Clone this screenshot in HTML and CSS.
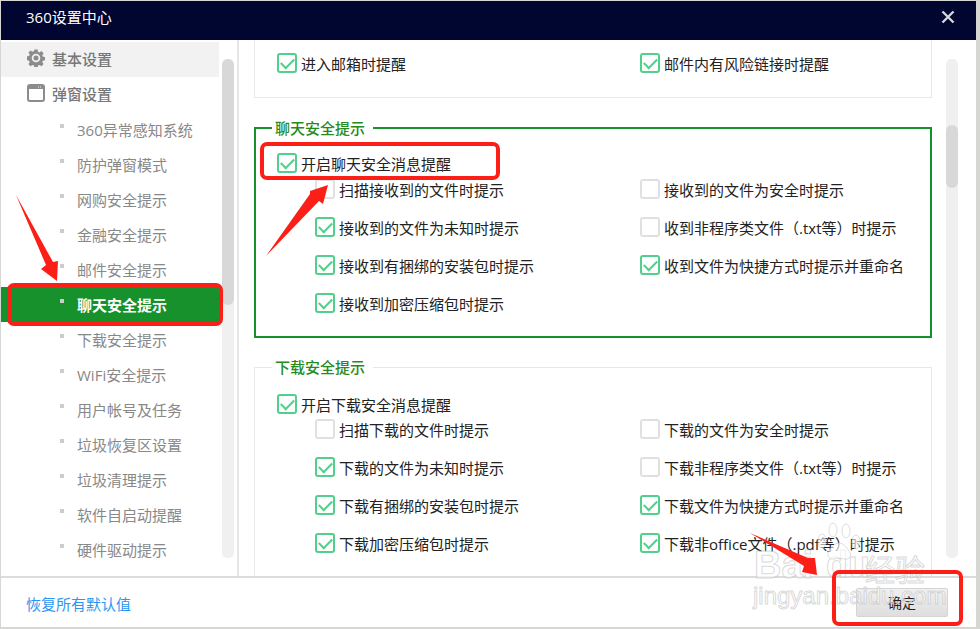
FILE: index.html
```html
<!DOCTYPE html>
<html lang="zh-CN">
<head>
  <meta charset="UTF-8">
  <title>360设置中心</title>
  <link rel="stylesheet" href="styles.css">
</head>
<body>
  <div class="window">
    <div class="titlebar">
      <div class="title">360设置中心</div>
      <svg class="close" width="14" height="14" viewBox="0 0 14 14"><path d="M1.5 1.5L12.5 12.5M12.5 1.5L1.5 12.5" stroke="#d5d5de" stroke-width="2.4" fill="none"/></svg>
    </div>
    <div class="main">
      <div class="sidebar">
        <div class="menu">
          <div class="menu-head current">
            <svg width="18" height="18" viewBox="0 0 18 18"><path d="M7.4 0.5h3.2l.4 2.3 1.5.6 1.9-1.3 2.2 2.2-1.3 1.9.6 1.5 2.300.4v3.200l-2.300.4-.6 1.500 1.300 1.900-2.200 2.200-1.900-1.300-1.500.6-.4 2.300H7.400l-.4-2.300-1.500-.6-1.900 1.300-2.200-2.200 1.300-1.900-.6-1.500-2.300-.4V7.400l2.300-.4.6-1.500-1.300-1.900 2.200-2.200 1.900 1.300 1.500-.6z" fill="#8c8c8c"/><circle cx="9" cy="9" r="4.300" fill="#f2f2f2"/><circle cx="9" cy="9" r="2.500" fill="#8c8c8c"/></svg>
            基本设置
          </div>
          <div class="menu-head">
            <svg width="18" height="18" viewBox="0 0 18 18"><rect x="1" y="1" width="16" height="16" rx="2" fill="none" stroke="#8c8c8c" stroke-width="2"/><rect x="1" y="1" width="16" height="4" fill="#8c8c8c"/><path d="M11 3h1M13 3h1" stroke="#eee" stroke-width="1"/></svg>
            弹窗设置
          </div>
          <div class="menu-item">360异常感知系统</div>
          <div class="menu-item">防护弹窗模式</div>
          <div class="menu-item">网购安全提示</div>
          <div class="menu-item">金融安全提示</div>
          <div class="menu-item">邮件安全提示</div>
          <div class="menu-item active">聊天安全提示</div>
          <div class="menu-item">下载安全提示</div>
          <div class="menu-item">WiFi安全提示</div>
          <div class="menu-item">用户帐号及任务</div>
          <div class="menu-item">垃圾恢复区设置</div>
          <div class="menu-item">垃圾清理提示</div>
          <div class="menu-item">软件自启动提醒</div>
          <div class="menu-item">硬件驱动提示</div>
        </div>
        <div class="scroll side-scroll"><div class="thumb"></div></div>
      </div>

      <div class="content">
        <div class="panes">
          <div class="box box-top">
            <div class="opts opts-top">
              <label class="opt"><span class="cb on"></span>进入邮箱时提醒</label>
              <label class="opt"><span class="cb on"></span>邮件内有风险链接时提醒</label>
            </div>
          </div>

          <fieldset class="box box-active">
            <legend>聊天安全提示</legend>
            <label class="opt master"><span class="cb on"></span>开启聊天安全消息提醒</label>
            <div class="opts">
              <label class="opt"><span class="cb"></span>扫描接收到的文件时提示</label>
              <label class="opt"><span class="cb"></span>接收到的文件为安全时提示</label>
              <label class="opt"><span class="cb on"></span>接收到的文件为未知时提示</label>
              <label class="opt"><span class="cb"></span>收到非程序类文件（.txt等）时提示</label>
              <label class="opt"><span class="cb on"></span>接收到有捆绑的安装包时提示</label>
              <label class="opt"><span class="cb on"></span>收到文件为快捷方式时提示并重命名</label>
              <label class="opt"><span class="cb on"></span>接收到加密压缩包时提示</label>
            </div>
          </fieldset>

          <fieldset class="box box-last">
            <legend>下载安全提示</legend>
            <label class="opt master"><span class="cb on"></span>开启下载安全消息提醒</label>
            <div class="opts">
              <label class="opt"><span class="cb"></span>扫描下载的文件时提示</label>
              <label class="opt"><span class="cb"></span>下载的文件为安全时提示</label>
              <label class="opt"><span class="cb on"></span>下载的文件为未知时提示</label>
              <label class="opt"><span class="cb"></span>下载非程序类文件（.txt等）时提示</label>
              <label class="opt"><span class="cb on"></span>下载有捆绑的安装包时提示</label>
              <label class="opt"><span class="cb on"></span>下载文件为快捷方式时提示并重命名</label>
              <label class="opt"><span class="cb on"></span>下载加密压缩包时提示</label>
              <label class="opt"><span class="cb on"></span>下载非office文件（.pdf等）时提示</label>
            </div>
          </fieldset>
        </div>
        <div class="scroll content-scroll"><div class="thumb"></div></div>
      </div>
    </div>
    <div class="footer">
      <a class="restore" href="#">恢复所有默认值</a>
      <button class="ok">确定</button>
    </div>
  </div>

  <!-- 水印在下，红色标注在上 -->
  <div class="wm wm-bai">Bai</div>
  <div class="wm wm-du">du</div>
  <div class="wm wm-jy">经验</div>
  <div class="wm wm-url">jingyan.baidu.com</div>
  <svg class="marks" width="980" height="629" viewBox="0 0 980 629">
    <g class="paw">
      <ellipse cx="822" cy="541" rx="4" ry="7"/>
      <ellipse cx="833" cy="530" rx="4" ry="7"/>
      <ellipse cx="846" cy="531" rx="4" ry="7"/>
      <ellipse cx="856" cy="542" rx="4" ry="7"/>
      <path d="M839 543c5 0 9 6 11 10s-2 7-6 6-7-1-10 0-7-2-6-6 6-10 11-10z"/>
    </g>
    <g fill="none" stroke="#fb1f17" stroke-width="4">
      <rect x="9" y="285" width="212" height="39" rx="5"/>
      <rect x="262" y="144" width="236" height="34" rx="5"/>
      <rect x="834" y="572" width="127" height="52" rx="5"/>
    </g>
    <g fill="#fb1f17">
      <polygon points="16,195 53,262 58,261 57,281 41,269 46,265"/>
      <polygon points="266,256 310,194 310,191 328,185 323,204 319,201"/>
      <polygon points="750,533 808,558 815,558 817,575 802,572 804,566"/>
    </g>
  </svg>
</body>
</html>
```

FILE: styles.css
```css
* {
  box-sizing: border-box;
}
body {
  margin: 0;
  height: 629px;
  overflow: hidden;
  background-color: #d6d6d2;
  font-family: "Open Sans", "Noto Sans CJK SC", sans-serif;
  font-size: 15px;
  padding: 1px 0 0 1px;
}

.window {
  width: 975px;
  height: 626px;
  background-color: #fff;
  display: flex;
  flex-direction: column;
}

.titlebar {
  height: 39px;
  flex: none;
  background-color: #00062f;
  color: #fff;
  display: flex;
  align-items: center;
  justify-content: space-between;
  padding: 0 21px 8px 25px;
}

.main {
  flex: 1;
  display: flex;
  min-height: 0;
}

.sidebar {
  width: 238px;
  flex: none;
  display: flex;
  border-right: 2px solid #e6e6e6;
  overflow: hidden;
}
.menu {
  width: 218px;
  flex: none;
  padding-top: 2px;
}
.menu-head {
  height: 35px;
  display: flex;
  align-items: center;
  gap: 7px;
  padding: 0 0 3px 26px;
  color: #777;
  font-weight: 500;
}
.menu-head.current {
  background-color: #f2f2f2;
}
.menu-item {
  height: 35px;
  display: flex;
  align-items: center;
  padding-left: 59px;
  color: #888;
}
.menu-item::before {
  content: "";
  width: 4px;
  height: 4px;
  margin: -7px 13px 0 0;
  background-color: #ccc;
  flex: none;
}
.menu-item.active {
  background-color: #17912c;
  color: #fff;
  font-weight: 700;
}

.scroll {
  flex: none;
  width: 12px;
  background-color: #f0f0f0;
  border-radius: 5px;
}
.thumb {
  background-color: #d8d8d8;
  border-radius: 6px;
}
.side-scroll {
  margin: 19px 0 18px 3px;
}
.side-scroll .thumb {
  height: 246px;
}

.content {
  flex: 1;
  display: flex;
  min-width: 0;
}
.panes {
  width: 693px;
  flex: none;
  padding-left: 15px;
  overflow: hidden;
}
.content-scroll {
  margin: 19px 0 18px 14px;
  padding-top: 66px;
}
.content-scroll .thumb {
  height: 63px;
}

.box {
  width: 678px;
  margin: 0;
  min-width: 0;
  border: 1px solid #e8e8e8;
  padding: 0 0 20px 22px;
}
.box legend {
  margin-left: -5px;
  padding: 0 8px 0 3px;
  color: #278a1c;
  font-weight: 500;
  line-height: 20px;
}
.box-top {
  height: 58px;
  border-top: 0;
  padding: 11px 0 0 22px;
}
.box-active {
  margin-top: 20px;
  border: 2px solid #17912c;
  padding: 13px 0 21px 21px;
}
.box-active .opts {
  padding-top: 2px;
}
.box-last {
  margin-top: 19px;
  padding: 15px 0 40px 22px;
}

.opts {
  display: grid;
  grid-template-columns: 325px 1fr;
  row-gap: 14px;
  padding: 1px 0 0 38px;
}
.opts-top {
  padding: 0;
  grid-template-columns: 363px 1fr;
}
.opt {
  height: 24px;
  display: flex;
  align-items: center;
  gap: 4px;
  color: #222;
  white-space: nowrap;
}
.cb {
  width: 20px;
  height: 20px;
  flex: none;
  border: 2px solid #e0e0e0;
  border-radius: 3px;
  display: flex;
  align-items: center;
  justify-content: center;
  background-color: #fff;
}
.cb.on {
  border-color: #52cf8b;
}
.cb.on::after {
  content: "";
  width: 11px;
  height: 6px;
  margin-top: -3px;
  border-left: 2px solid #52cf8b;
  border-bottom: 2px solid #52cf8b;
  transform: rotate(-45deg);
}

.footer {
  height: 51px;
  flex: none;
  border-top: 2px solid #dcdcdc;
  display: flex;
  align-items: center;
  justify-content: space-between;
  padding: 0 28px 0 25px;
}
.restore {
  color: #2b96f1;
  text-decoration: none;
  margin-top: 1px;
}
.ok {
  width: 92px;
  height: 29px;
  margin-top: -1px;
  border: 1px solid #d4d4d4;
  border-radius: 2px;
  background: linear-gradient(#f0f0f0, #dedede);
  color: #222;
  font: inherit;
  font-size: 14px;
}

.marks {
  position: absolute;
  left: 0;
  top: 0;
}
.paw {
  fill: rgba(255, 255, 255, 0.6);
  stroke: rgba(190, 190, 190, 0.5);
}
.wm {
  position: absolute;
  font-family: "Liberation Sans", sans-serif;
  color: rgba(255, 255, 255, 0.65);
  -webkit-text-stroke: 1px rgba(185, 185, 185, 0.55);
  white-space: nowrap;
}
.wm-bai {
  left: 754px;
  top: 544px;
  font-size: 38px;
  font-weight: 700;
}
.wm-du {
  left: 826px;
  top: 544px;
  font-size: 36px;
  font-weight: 700;
}
.wm-jy {
  left: 865px;
  top: 546px;
  font-family: "Noto Sans CJK SC", sans-serif;
  font-size: 30px;
}
.wm-url {
  left: 753px;
  top: 582px;
  font-size: 24px;
}
```
